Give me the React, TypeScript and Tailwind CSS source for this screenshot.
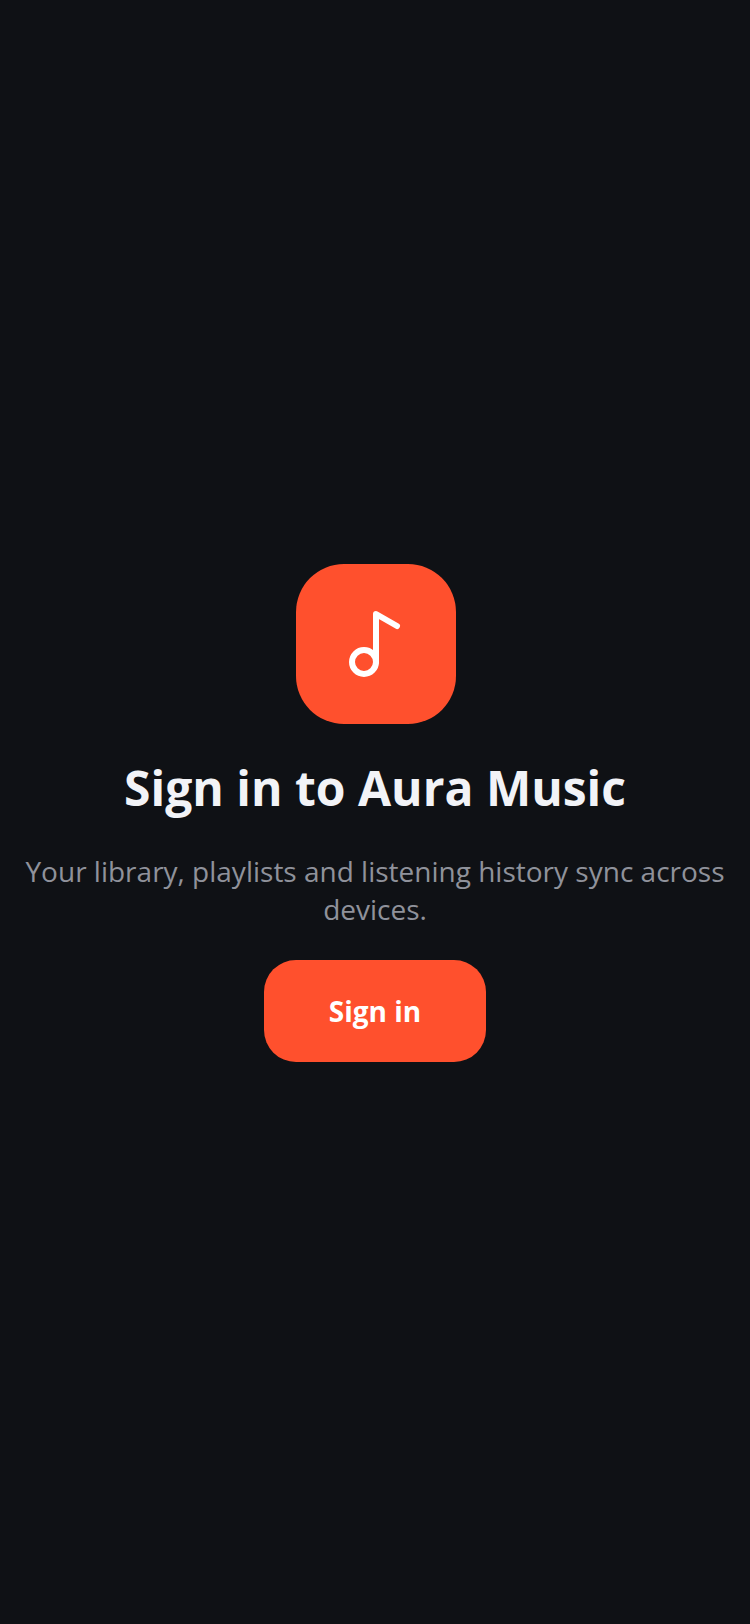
import { Music2 } from 'lucide-react'

export default function App() {
  return (
    <div className="flex h-[1624px] flex-col items-center justify-center bg-[#0f1115] px-6 pt-[2px] font-['Open_Sans',sans-serif]">
      <div className="ml-[2px] flex h-40 w-40 items-center justify-center rounded-[48px] bg-[#ff502d]">
        <Music2 size={72} color="#ffffff" />
      </div>
      <h1 className="mt-8 text-[48px] leading-[64px] font-bold text-[#f2f3f7]">Sign in to Aura Music</h1>
      <p className="mt-8 text-center text-[28px] leading-[38px] text-[#8f929b]">
        Your library, playlists and listening history sync across devices.
      </p>
      <button className="mt-8 flex h-[102px] w-[222px] items-center justify-center rounded-[32px] bg-[#ff502d] text-[28px] font-bold text-white">
        Sign in
      </button>
    </div>
  )
}
